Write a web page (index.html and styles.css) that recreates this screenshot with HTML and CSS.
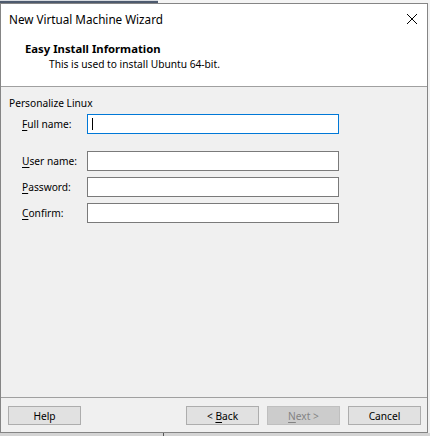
FILE: index.html
```html
<!DOCTYPE html>
<html>
<head>
<meta charset="utf-8">
<link rel="stylesheet" href="styles.css">
</head>
<body>
<div class="screen">
  <div class="topstrip"><div class="topbar"></div></div>
  <div class="middle">
    <div class="window">
      <div class="titlebar">
        <span class="title">New Virtual Machine Wizard</span>
        <svg class="close" width="12" height="12" viewBox="0 0 12 12"><path d="M1 1 L11 11 M11 1 L1 11" stroke="#000" stroke-width="1" fill="none"/></svg>
      </div>
      <div class="header">
        <div class="heading">Easy Install Information</div>
        <div class="subheading">This is used to install Ubuntu 64-bit.</div>
      </div>
      <div class="content">
        <div class="group-label">Personalize Linux</div>
        <div class="form">
          <label class="lbl"><u>F</u>ull name:</label>
          <div class="input focused"><span class="caret"></span></div>
          <label class="lbl row-gap"><u>U</u>ser name:</label>
          <div class="input row-gap"></div>
          <label class="lbl"><u>P</u>assword:</label>
          <div class="input"></div>
          <label class="lbl"><u>C</u>onfirm:</label>
          <div class="input"></div>
        </div>
      </div>
      <div class="footer">
        <button class="btn">Help</button>
        <div class="spacer"></div>
        <button class="btn">&lt; <u>B</u>ack</button>
        <button class="btn disabled"><u>N</u>ext &gt;</button>
        <button class="btn">Cancel</button>
      </div>
    </div>
    <div class="rightstrip"></div>
  </div>
  <div class="bottomstrip"><div class="vline"></div></div>
</div>
</body>
</html>
```
FILE: styles.css
```css
html, body {
  margin: 0;
  padding: 0;
  background: #ffffff;
}
.screen {
  width: 430px;
  height: 436px;
  display: flex;
  flex-direction: column;
  font-family: "Segoe UI", "Noto Sans", "Liberation Sans", sans-serif;
  font-size: 10.2px;
  color: #000;
  overflow: hidden;
}
.topstrip {
  height: 3px;
  background: #f4f4f4;
  display: flex;
}
.topbar {
  width: 158px;
  height: 3px;
  background: linear-gradient(#d8dbe0 0 1px, #4d5a6e 1px 3px);
}
.middle {
  display: flex;
  height: 430px;
}
.window {
  width: 426px;
  height: 428px;
  border: 1px solid #858585;
  display: flex;
  flex-direction: column;
  background: #f0f0f0;
}
.rightstrip {
  flex: 1;
  background: #f2f2f2;
}
.bottomstrip {
  height: 3px;
  background: #d4d4d4;
  position: relative;
}
.vline {
  position: absolute;
  left: 163px;
  top: 0;
  width: 1px;
  height: 3px;
  background: #555;
}
.titlebar {
  height: 30px;
  background: #fff;
  display: flex;
  align-items: center;
  justify-content: space-between;
  padding: 0 8px 0 8px;
}
.title {
  font-size: 11.7px;
}
.close {
  margin-right: 1px;
}
.header {
  height: 53px;
  background: #fff;
  border-bottom: 1px solid #a0a0a0;
  padding-left: 24px;
  padding-top: 7px;
  box-sizing: border-box;
}
.heading {
  font-weight: bold;
  font-size: 11.3px;
  line-height: 16px;
}
.subheading {
  padding-left: 24px;
  line-height: 16px;
  margin-top: -1px;
}
.content {
  height: 310px;
  box-sizing: border-box;
  padding: 8px 0 0 8px;
}
.group-label {
  line-height: 16px;
}
.form {
  display: grid;
  grid-template-columns: 65px 252px;
  row-gap: 6px;
  margin-top: 3px;
  padding-left: 13px;
}
.lbl {
  display: flex;
  align-items: center;
  height: 20px;
  white-space: nowrap;
}
.lbl u {
  text-decoration-thickness: 1px;
  text-underline-offset: 2px;
}
.row-gap {
  margin-top: 11px;
}
.input {
  height: 20px;
  box-sizing: border-box;
  border: 1px solid #7a7a7a;
  background: #fff;
  position: relative;
}
.input.focused {
  border-color: #0078d7;
}
.caret {
  position: absolute;
  left: 4px;
  top: 3px;
  width: 1px;
  height: 12px;
  background: #000;
}
.footer {
  border-top: 1px solid #a0a0a0;
  flex: 1;
  display: flex;
  align-items: flex-start;
  gap: 8px;
  padding: 8px 6px 0 7px;
}
.spacer {
  flex: 1;
}
.btn {
  width: 73px;
  height: 19px;
  box-sizing: border-box;
  border: 1px solid #adadad;
  background: #e1e1e1;
  font-family: inherit;
  font-size: 10.2px;
  color: #000;
  padding: 0;
  line-height: 16px;
}
.btn u {
  text-underline-offset: 2px;
}
.btn.disabled {
  background: #cccccc;
  border-color: #bfbfbf;
  color: #838383;
}
```
